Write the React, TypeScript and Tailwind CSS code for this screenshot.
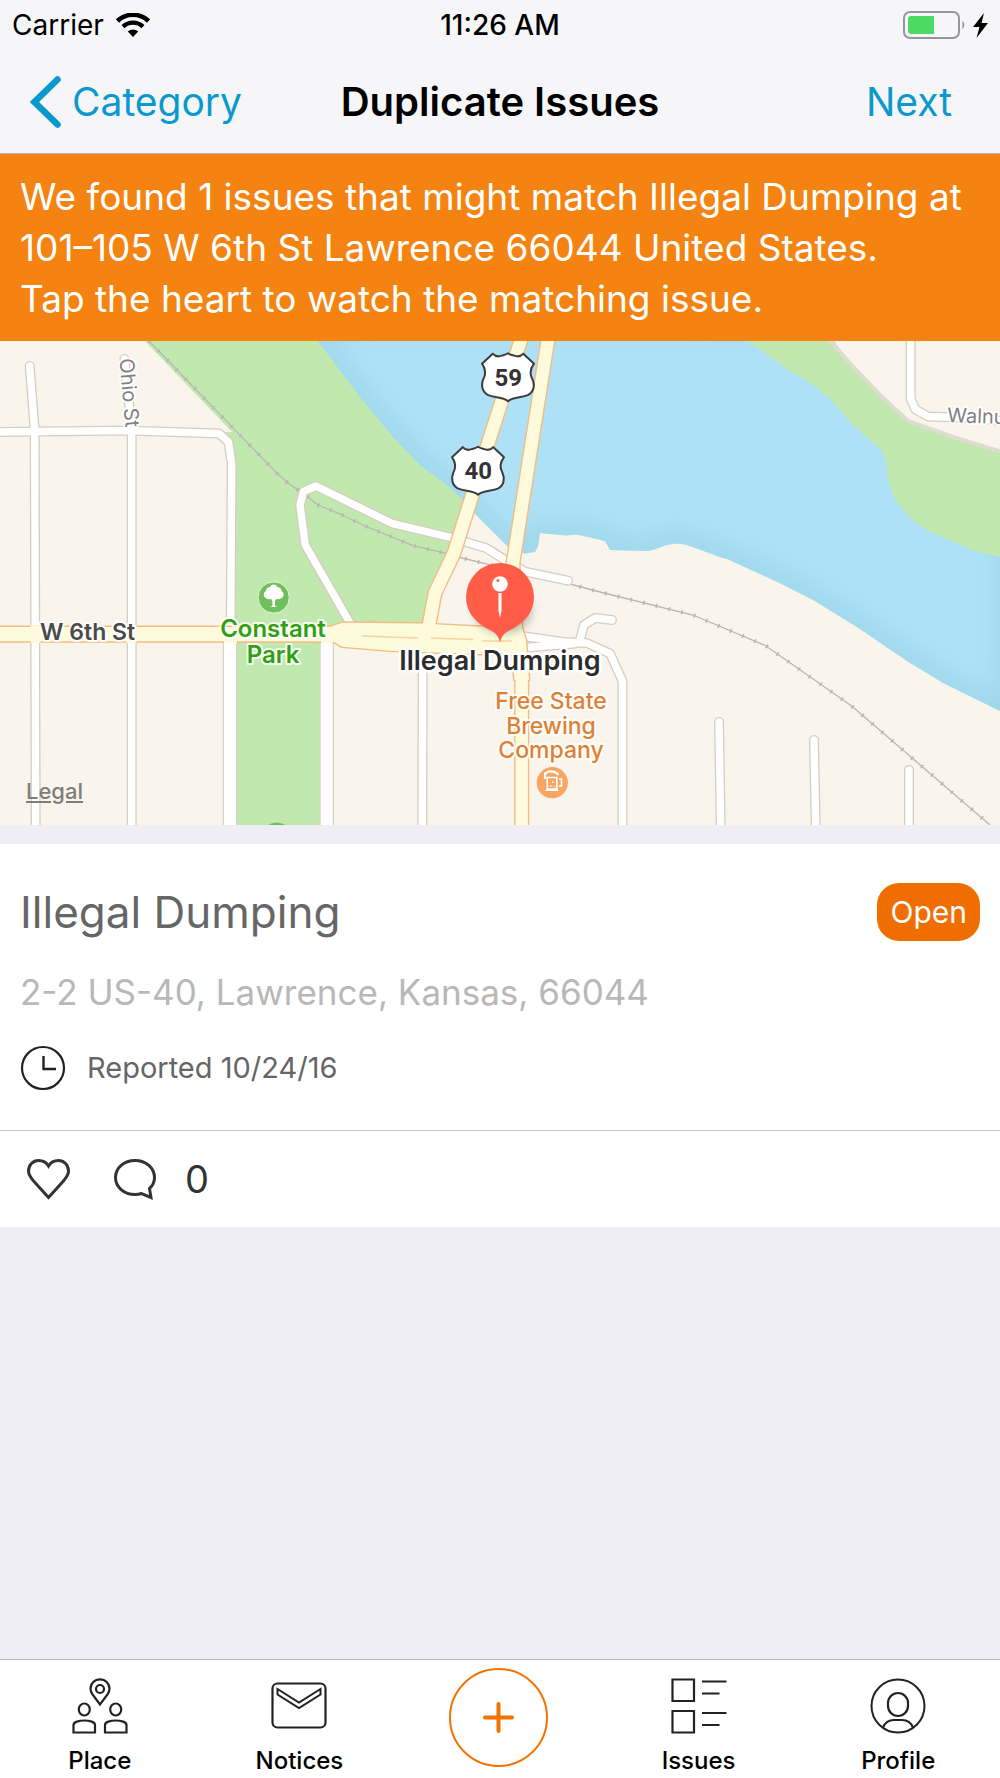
import type { ReactNode } from 'react';

const MINOR_STREETS = [
  'M0 432L126 430.5L219 433.5L228.5 442L231.7 464L230.7 634',
  'M29.7 366L34.7 430L35.7 825',
  'M124.5 359L131.7 430V825',
  'M422.7 650L422.3 825',
  'M354 630L305.3 545L300 505L303.5 491.5L316 486L391.7 523.3L453 538L486.7 548.3L510 563L525 571.7L568 580.7',
  'M522 636L563 642L586.7 643L610 653.5L622.5 681V825',
  'M522 648L575 643.5',
  'M579.5 642L584 625L595 618L612 620',
  'M719 722L720.7 825',
  'M814 740L815.7 825',
  'M909 770V825',
  'M910.7 336V399L915.5 409.5L928 416.5L960 417.5L1005 421',
];

const WIDE_STREETS = ['M230 634V825', 'M326.7 634V825'];

const HIGHWAYS = [
  'M524 330L502.7 398L487 447L471.7 497L454 553L435 593L427.7 632',
  'M549.5 330L513 563L516 632L521.7 680V832',
];

const BOULEVARD =
  'M-5 627H330L342 622.7L420 623.5L435 624.3L480 626.7L521 625L526 640L529 680H514.5L512 655L480 654L390 650.7L342 646.7L333 641.3H-5Z';

const RAILWAY =
  'M149 341L276.7 473L288 483L306.7 496L318 505L340 514L365 526L413 545.7L443 552.7L462 558L570 584L600 592L693 615L765.7 645.7L851.7 706L990 825';

const RIVER =
  'M300 320L318 341L360 397L393 437L420 465L447 485L463 500L474 515L510 549L525 553.5L535 552L538 546L540 533L566 535.5L577 534.5L605 541L610 550L646 551C658 550 664 544 677 543.5C690 544 705 553 727 559L777 581.7L813 600L857 627L907 661L943 683L1010 716V340L700 320Z';

const EAST_BANK =
  'M740 335L788 370L812 384L833 401.7L853 425L882 451Q885 454 886 462L890 487L896.7 501.7L905 512Q916 524 930 531.7L977 551.7L1005 558V452L953 437L908 421L880 395L853 366.7L826 336Z';

const SHIELD =
  'M33 2C41 11 50 12 60 8C67 6 74 5 79 1C84 5 91 6 98 8C108 12 117 11 125 2L157 32C145 48 143 62 152 78C160 95 158 115 140 126C120 136 95 130 79 145C63 130 38 136 18 126C0 115 -2 95 5 78C14 62 12 48 1 32Z';

function RouteShield({ x, y, route }: { x: number; y: number; route: string }) {
  return (
    <g transform={`translate(${x} ${y})`}>
      <path d={SHIELD} transform="scale(.333)" fill="#fff" stroke="#3c3c3c" strokeWidth="6" strokeLinejoin="round" />
      <text x="26.5" y="32.5" textAnchor="middle" className="fill-[#333333] font-['Roboto',sans-serif] text-[24px] font-bold">
        {route}
      </text>
    </g>
  );
}

function IssueMap() {
  return (
    <section aria-label="Map" className="relative">
      <svg viewBox="0 341 1000 484" className="block h-auto w-full bg-[#f9f5ed]" role="img" aria-label="Map around W 6th St">
        <defs>
          <clipPath id="river">
            <path d={RIVER} />
          </clipPath>
          <filter id="soft" x="-20%" y="-20%" width="140%" height="140%">
            <feGaussianBlur stdDeviation="12" />
          </filter>
          <filter id="pinShadow" x="-50%" y="-50%" width="200%" height="200%">
            <feGaussianBlur stdDeviation="5" />
          </filter>
        </defs>

        <path d="M145 341L232 432H217L228 442L232 464V825H322V634H430L472 516L463 500L440 330L318 330Z" fill="#c1e8ae" />
        <path d={RIVER} fill="#aee1f6" />
        <g clipPath="url(#river)">
          <path d={RIVER} fill="none" stroke="#9dd6e8" strokeWidth="22" filter="url(#soft)" />
        </g>
        <path d="M826 330L853 366.7L880 395L908 421L953 437L1005 453V330Z" fill="#f9f5ed" />
        <path d={EAST_BANK} fill="#c1e8ae" />
        <path d="M826 336L853 366.7L880 395L908 421L953 437L1005 453" fill="none" stroke="#dedbd0" strokeWidth="4" />
        <path d="M463 500L474 515L452 560L428 640H418Z" fill="#c1e8ae" />
        <path d="M474 513L512 551V620H432Z" fill="#f9f5ed" />

        <path d={RAILWAY} fill="none" stroke="#b9b6b5" strokeWidth="1.3" />
        <path d={RAILWAY} fill="none" stroke="#b9b6b5" strokeWidth="4.2" strokeDasharray="1.6 11.500" />

        <g fill="none" strokeLinejoin="round">
          {WIDE_STREETS.map((d) => (
            <path key={d} d={d} stroke="#d9d1c6" strokeWidth="14.4" />
          ))}
          {MINOR_STREETS.map((d) => (
            <path key={d} d={d} stroke="#d6cdc1" strokeWidth="10" strokeLinecap="round" />
          ))}
          {WIDE_STREETS.map((d) => (
            <path key={d} d={d} stroke="#fff" strokeWidth="12" />
          ))}
          {MINOR_STREETS.map((d) => (
            <path key={d} d={d} stroke="#fff" strokeWidth="7.4" strokeLinecap="round" />
          ))}
          <path d={BOULEVARD} stroke="#f3bc82" strokeWidth="2.8" />
          {HIGHWAYS.map((d) => (
            <path key={d} d={d} stroke="#f3bc82" strokeWidth="15.2" />
          ))}
          <path d={BOULEVARD} fill="#fdfbdc" />
          {HIGHWAYS.map((d) => (
            <path key={d} d={d} stroke="#fdfbdc" strokeWidth="12.4" />
          ))}
          <path d="M362 636L418 638M431 638L473 639.5M482 641H512" stroke="#f8d3a2" strokeWidth="1.4" />
          <path d="M30.500 626.500h10M30.500 641.800h10M126.500 626.500h10M126.500 641.800h10M224 642h13M321 642h12" stroke="#fdfbdc" strokeWidth="2.600" />
        </g>

        <RouteShield x={481.7} y={353} route="59" />
        <RouteShield x={451.7} y={446.5} route="40" />

        <g
          stroke="#fff"
          strokeWidth="4"
          strokeOpacity=".85"
          strokeLinejoin="round"
          paintOrder="stroke"
          className="font-['Inter',sans-serif] text-[23px]"
        >
          <text transform="translate(119.5 359) rotate(85)" className="fill-[#808083] text-[20px]">
            Ohio St
          </text>
          <text transform="translate(947 422) rotate(2)" className="fill-[#808083] text-[20px]">
            Walnut St
          </text>
          <text x="40" y="640" className="fill-[#4a4a4c] font-semibold">
            W 6th St
          </text>
          <g textAnchor="middle" className="fill-[#30a00f] text-[24px] font-semibold">
            <text x="273" y="637">Constant</text>
            <text x="273" y="663">Park</text>
          </g>
          <g textAnchor="middle" className="fill-[#dc8134] font-medium">
            <text x="551" y="709">Free State</text>
            <text x="551" y="734">Brewing</text>
            <text x="551" y="758">Company</text>
          </g>
        </g>

        <circle cx="273.7" cy="597.5" r="15.6" fill="#6fc05c" stroke="#e3f4da" strokeWidth="1" />
        <path
          d="M266.5 598.5a4 4 0 0 1-.6-7.400a3.600 3.600 0 0 1 4-3.800a4 4 0 0 1 7.600 0a3.600 3.600 0 0 1 4 3.800a4 4 0 0 1-.6 7.400c-1.500 1-3.500.8-4.500.2l-1.400 2.400v4.400l2 1.400h-6.600l2-1.400v-4.400l-1.400-2.400c-1.200.8-3 .7-4.500-.2Z"
          fill="#fff"
        />
        <circle cx="276.700" cy="838" r="15.600" fill="#6fc05c" />

        <circle cx="552.300" cy="782.700" r="15.600" fill="#f7a563" />
        <g fill="none" stroke="#fff" strokeWidth="1.600">
          <path d="M547.300 777.500h9.500v11.500h-9.500zM545.500 790.300h13M559 779h2.500v7h-2.500" />
          <path d="M545 779v-4.500q0-2 2-2q1-1.500 3-.8q2-1 3.500.3q2-.5 2.500 1.200q2 0 2 2" strokeWidth="2.200" />
          <path d="M552 782h1.500M550 786h1.500M553.500 786.500h1" />
        </g>

        <ellipse cx="503" cy="611" rx="28" ry="22" fill="#000" opacity=".28" filter="url(#pinShadow)" />
        <path
          d="M500 642.500C498 634 494 632 486 628C474 621 466 611 466 597A34 34 0 0 1 534 597C534 611 526 621 514 628C506 632 502 634 500 642.500Z"
          fill="#ff5d48"
        />
        <circle cx="500" cy="584" r="7.800" fill="#fff" />
        <circle cx="498" cy="580.500" r="1.500" fill="#ff5d48" />
        <path d="M498.500 593h3v18l-1.500 7l-1.500-7z" fill="#fff" />
        <text
          x="500"
          y="670"
          textAnchor="middle"
          stroke="#fff"
          strokeWidth="5"
          strokeLinejoin="round"
          paintOrder="stroke"
          className="fill-[#2c2c2e] font-['Inter',sans-serif] text-[27px] font-semibold"
        >
          Illegal Dumping
        </text>
      </svg>
      <a href="#legal" className="absolute bottom-5 left-[26px] text-[22px] leading-7 font-medium text-[#7f7d7a] underline underline-offset-2">
        Legal
      </a>
    </section>
  );
}

function StatusBar() {
  return (
    <div className="grid h-[50px] grid-cols-3 items-center px-3 text-[28px] leading-8 text-black">
      <div className="flex items-center gap-3">
        <span>Carrier</span>
        <svg width="34" height="24" viewBox="0 0 34 24" fill="none" aria-label="Wi-Fi">
          <path d="M1.500 8A22.500 22.500 0 0 1 32.500 8" stroke="#000" strokeWidth="4.600" />
          <path d="M7 13.600A14.600 14.600 0 0 1 27 13.600" stroke="#000" strokeWidth="4.200" />
          <path d="M17 24L11.800 18.600A7.400 7.400 0 0 1 22.200 18.600Z" fill="#000" />
        </svg>
      </div>
      <span className="text-center font-medium">11:26 AM</span>
      <div className="flex items-center justify-end gap-[7px]">
        <svg width="63" height="28" viewBox="0 0 63 28" fill="none" aria-label="Battery">
          <rect x="1" y="1" width="55" height="26" rx="6" stroke="#97979a" strokeWidth="2" />
          <path d="M8 5H31V23H8Q5 23 5 20V8Q5 5 8 5Z" fill="#4cd964" />
          <path d="M59.500 9.500Q63 14 59.500 18.500Z" fill="#8e8e90" />
        </svg>
        <svg width="15" height="25" viewBox="0 0 15 25" aria-label="Charging">
          <path d="M11 0L0 14H6.500L3.500 25L15 10H8.500Z" fill="#000" />
        </svg>
      </div>
    </div>
  );
}

function NavBar() {
  return (
    <header className="border-b border-[#b9b2ab] bg-[#f6f6f8]">
      <StatusBar />
      <div className="grid h-[103px] grid-cols-[1fr_auto_1fr] items-center px-[30px]">
        <button type="button" className="flex items-center gap-[11px] text-left text-[39px] leading-[48px] text-[#0a99cd]">
          <svg width="31" height="52" viewBox="0 0 31 52" fill="none" aria-hidden="true">
            <path d="M27.500 3.500L4.500 26L27.500 48.500" stroke="currentColor" strokeWidth="6.600" strokeLinecap="round" />
          </svg>
          Category
        </button>
        <h1 className="text-[40px] leading-[48px] font-semibold text-black">Duplicate Issues</h1>
        <div className="pr-[18px] text-right">
          <button type="button" className="text-[39px] leading-[48px] text-[#0a99cd]">
            Next
          </button>
        </div>
      </div>
    </header>
  );
}

function IssueCard() {
  return (
    <article className="mt-[19px] bg-white">
      <div className="px-5 pt-[38px] pb-10">
        <div className="flex h-[60px] items-center justify-between">
          <h2 className="text-[44px] leading-[56px] text-[#666666]">Illegal Dumping</h2>
          <span className="rounded-[22px] bg-[#f06e00] px-[13px] py-[10px] text-[30px] leading-[38px] text-white">Open</span>
        </div>
        <p className="mt-7 text-[35px] leading-[44px] text-[#b8b8b8]">2-2 US-40, Lawrence, Kansas, 66044</p>
        <div className="mt-8 flex h-11 items-center gap-[21px]">
          <svg width="46" height="46" viewBox="0 0 46 46" fill="none" stroke="#222" aria-hidden="true">
            <circle cx="23" cy="23" r="21" strokeWidth="2.200" />
            <path d="M23.500 11V24H36" strokeWidth="2.400" />
          </svg>
          <p className="text-[29px] leading-9 text-[#666666]">Reported 10/24/16</p>
        </div>
      </div>
      <div className="flex h-[97px] items-center border-t border-[#c8c8ca] px-[26px]">
        <button type="button" aria-label="Watch issue">
          <svg width="45" height="43" viewBox="0 0 45 43" fill="none" aria-hidden="true">
            <path
              d="M22.500 39.500L8 23.500C4.500 19.500 2.500 16.500 2.500 13C2.500 7 7 2.500 12.500 2.500C17 2.500 20.500 4.500 22.500 8C24.500 4.500 28 2.500 32.500 2.500C38 2.500 42.500 7 42.500 13C42.500 16.500 40.500 19.500 37 23.500Z"
              stroke="#333"
              strokeWidth="3"
            />
          </svg>
        </button>
        <button type="button" className="ml-[42px] flex items-center gap-7 text-[38px] leading-[48px] text-[#333333]">
          <svg width="44" height="42" viewBox="0 0 44 42" fill="none" aria-hidden="true">
            <path
              d="M22 2.500C33 2.500 41.500 10 41.500 19.500C41.500 23.500 40 27.500 36.500 30.500L38 39.500L28.500 35.500C26.500 36.300 24 36.500 22 36.500C11 36.500 2.500 29 2.500 19.500C2.500 10 11 2.500 22 2.500Z"
              stroke="#333"
              strokeWidth="3"
            />
          </svg>
          0
        </button>
      </div>
    </article>
  );
}

function TabIcon({ children }: { children: ReactNode }) {
  return (
    <svg width="56" height="56" viewBox="0 0 56 56" fill="none" stroke="#222" strokeWidth="2.200" aria-hidden="true">
      {children}
    </svg>
  );
}

function Tab({ label, children }: { label: string; children: ReactNode }) {
  return (
    <a href={`#${label.toLowerCase()}`} className="flex flex-col items-center gap-[13px] pt-[18px] text-[24px] leading-7 font-medium text-black">
      <TabIcon>{children}</TabIcon>
      {label}
    </a>
  );
}

function TabBar() {
  return (
    <nav className="grid h-[119px] grid-cols-5 border-t border-[#b8b8bb] bg-white pr-[2px]">
      <Tab label="Place">
        <path d="M28 26.500L20.500 16.500C19 14 18.500 12.500 18.500 10.800A9.500 9.500 0 0 1 37.500 10.800C37.500 12.500 37 14 35.500 16.500Z" />
        <circle cx="28" cy="11" r="4" />
        <ellipse cx="12.300" cy="31.500" rx="5.500" ry="6" />
        <ellipse cx="43.700" cy="31.500" rx="5.500" ry="6" />
        <path d="M1.500 54.500V47C1.500 44 7 42.500 12.300 42.500S23 44 23 47V54.500Z" />
        <path d="M33 54.500V47C33 44 38.500 42.500 43.700 42.500S54.500 44 54.500 47V54.500Z" />
      </Tab>
      <Tab label="Notices">
        <rect x="1.500" y="5.500" width="53" height="44" rx="5" />
        <path d="M6.500 11L28 24.500L49.500 11V16.500L28 30L6.500 16.500Z" strokeWidth="2" />
      </Tab>
      <div className="flex items-start justify-center pt-2">
        <button
          type="button"
          aria-label="Add issue"
          className="flex size-[99px] items-center justify-center rounded-full border-2 border-[#f47200]"
        >
          <svg width="31" height="31" viewBox="0 0 31 31" aria-hidden="true">
            <path d="M15.500 2V29M2 15.500H29" stroke="#f47200" strokeWidth="4" strokeLinecap="round" />
          </svg>
        </button>
      </div>
      <Tab label="Issues">
        <path d="M1.500 1.500H23V23H1.500ZM1.500 33H23V54.500H1.500Z" />
        <path d="M31 3.500H55.500M31 15.500H48.500M31 35H55.500M31 47H48.500" />
      </Tab>
      <Tab label="Profile">
        <circle cx="28" cy="28" r="26.500" strokeWidth="2" />
        <rect x="18" y="15" width="20" height="23" rx="10" />
        <path d="M13 49.500C15 44.500 19 42 24 42H32C37 42 41 44.500 43 49.500" />
      </Tab>
    </nav>
  );
}

export default function App() {
  return (
    <div className="flex min-h-screen flex-col bg-[#efeef4] font-['Inter',sans-serif]">
      <NavBar />
      <main className="flex-1">
        <p className="bg-[#f58311] px-5 py-[17px] text-[37px] leading-[51px] text-white">
          We found 1 issues that might match Illegal Dumping at
          <br />
          101–105 W 6th St Lawrence 66044 United States.
          <br />
          Tap the heart to watch the matching issue.
        </p>
        <IssueMap />
        <IssueCard />
      </main>
      <TabBar />
    </div>
  );
}
